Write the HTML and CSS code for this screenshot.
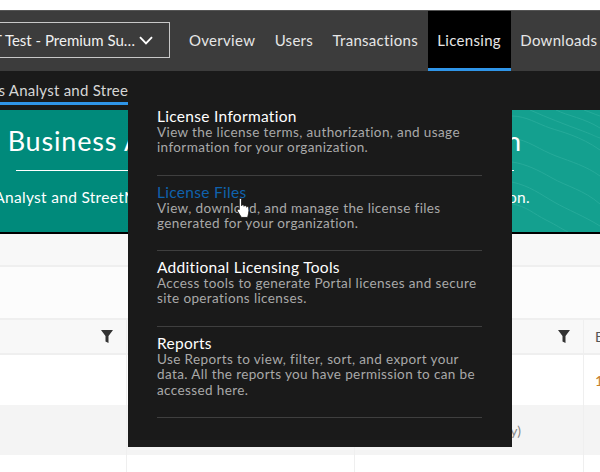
FILE: index.html
```html
<!DOCTYPE html>
<html lang="en">
<head>
<meta charset="utf-8">
<title>Licensing</title>
<link rel="stylesheet" href="styles.css">
</head>
<body>
<div class="page">
  <header class="nav">
    <button class="org"><span class="org-name">T Test - Premium Su…</span>
      <svg class="chev" width="14" height="9" viewBox="0 0 14 9"><path d="M1 1.2 7 7.4 13 1.2" fill="none" stroke="#fff" stroke-width="1.9"/></svg>
    </button>
    <nav class="tabs">
      <a class="tab">Overview</a>
      <a class="tab">Users</a>
      <a class="tab">Transactions</a>
      <a class="tab active">Licensing</a>
      <a class="tab">Downloads</a>
    </nav>
  </header>
  <div class="subnav"><span class="subtab">Business Analyst and StreetMap Premium</span></div>
  <section class="hero">
    <svg class="contours" width="600" height="122" viewBox="0 0 600 122">
      <g fill="none" stroke="#37b5a5" stroke-width="1" opacity=".5">
        <path d="M512 6c14 0 26 8 38 12s30 8 50 22"/>
        <path d="M512 28c16 2 28 12 44 18s30 10 44 20"/>
        <path d="M512 52c14 2 26 8 40 16s32 12 48 26"/>
        <path d="M512 72c18 4 28 12 42 20s30 14 46 24"/>
        <path d="M512 94c14 2 22 10 34 16s14 8 22 12"/>
        <path d="M556 0c12 6 28 8 44 18"/>
        <path d="M530 0c18 8 34 14 50 20s14 6 20 8"/>
        <path d="M584 0c6 2 10 4 16 6"/>
      </g>
    </svg>
    <h1 class="hero-title">Business Analyst – Licensing Information</h1>
    <div class="hero-rule"></div>
    <p class="hero-sub">Business Analyst and StreetMap Premium licensing information for your organization.</p>
  </section>
  <div class="strip strip-a"></div>
  <div class="strip strip-b"></div>
  <div class="table">
    <div class="row head">
      <div class="cell c1"><svg class="filter" width="12" height="13" viewBox="0 0 12 13"><path d="M0 0h12L7.500 6v7l-3-1.500V6z" fill="#333"/></svg></div>
      <div class="cell c2"><svg class="filter" width="12" height="13" viewBox="0 0 12 13"><path d="M0 0h12L7.500 6v7l-3-1.500V6z" fill="#333"/></svg></div>
      <div class="cell c3"><svg class="filter" width="12" height="13" viewBox="0 0 12 13"><path d="M0 0h12L7.500 6v7l-3-1.500V6z" fill="#333"/></svg></div>
      <div class="cell c4 head-label">Expires</div>
    </div>
    <div class="row one">
      <div class="cell c1"></div><div class="cell c2"></div><div class="cell c3"></div>
      <div class="cell c4 orange">1</div>
    </div>
    <div class="row two">
      <div class="cell c1"></div><div class="cell c2"></div><div class="cell c3 muted">Business Analyst (Monthly)</div><div class="cell c4"></div>
    </div>
    <div class="row three">
      <div class="cell c1"></div><div class="cell c2"></div><div class="cell c3"></div><div class="cell c4"></div>
    </div>
  </div>

  <div class="menu">
    <a class="item">
      <span class="item-title">License Information</span>
      <span class="item-text">View the license terms, authorization, and usage information for your organization.</span>
    </a>
    <a class="item">
      <span class="item-title hover">License Files</span>
      <span class="item-text">View, download, and manage the license files generated for your organization.</span>
    </a>
    <a class="item">
      <span class="item-title">Additional Licensing Tools</span>
      <span class="item-text">Access tools to generate Portal licenses and secure site operations licenses.</span>
    </a>
    <a class="item">
      <span class="item-title">Reports</span>
      <span class="item-text">Use Reports to view, filter, sort, and export your data. All the reports you have permission to can be accessed here.</span>
    </a>
  </div>
  <svg class="cursor" width="16" height="21" viewBox="0 0 14 20">
    <path d="M2.500 1.500c0-1.400 2.200-1.400 2.200 0v5.800c.2-1.200 2.100-1.200 2.300 0v.6c.3-1.100 2.100-1 2.300.2v.6c.4-.9 2.100-.7 2.200.5.3 2 .3 4-.2 5.800l-.8 3.500H4.500L1 12.800C0 11.400 1.200 10 2.500 11z" fill="#fff" stroke="#111" stroke-width=".8" stroke-linejoin="round"/>
  </svg>
</div>
</body>
</html>
```
FILE: styles.css
```css
* { box-sizing: border-box; }
html, body { margin: 0; padding: 0; background: #fff; }
body { font-family: Lato, "Noto Sans", "Liberation Sans", sans-serif; }
.page { position: relative; width: 600px; height: 472px; overflow: hidden; padding-top: 10px; }

.nav { height: 61px; background: #3c3c3c; border-top: 1px solid #555; display: flex; align-items: stretch; margin-left: -20px; width: 640px; }
.org { margin: 11px 0 0 0; width: 190px; height: 36px; background: transparent; border: 1px solid #c8c8c8; color: #f0f0f0; font: inherit; font-size: 15px; display: flex; align-items: center; justify-content: flex-end; gap: 4px; padding: 0 16px 0 0; white-space: nowrap; }
.org-name { letter-spacing: 0; }
.chev { flex: none; }
.tabs { display: flex; margin-left: 9.3px; }
.tab { display: flex; align-items: center; padding: 0 9.7px; font-size: 15px; color: #e6e6e6; letter-spacing: .3px; border-bottom: 3px solid transparent; white-space: nowrap; height: 60px; }
.tab.active { background: #000; border-bottom-color: #2f95e8; }

.subnav { height: 39px; background: #1a1a1a; margin-left: -54px; width: 700px; padding-bottom: 5px; display: flex; }
.subtab { font-size: 15px; color: #d6d6d6; letter-spacing: .25px; width: 182px; white-space: nowrap; border-bottom: 3px solid #2f95e8; overflow: hidden; padding-top: 9px; line-height: 20px; }

.hero { position: relative; height: 122px; background: linear-gradient(90deg, #008a7b 0 20%, #069080 45%, #14a08f 85%); overflow: hidden; color: #fff; display: flex; flex-direction: column; align-items: center; padding-right: 70px; }
.contours { position: absolute; inset: 0; }
.hero-title { position: relative; align-self: flex-end; padding-right: 8px; font-weight: 400; font-size: 27px; line-height: 34px; margin: 14px 0 0; white-space: nowrap; letter-spacing: .82px; }
.hero-rule { position: relative; width: 498px; flex: none; border-top: 1px solid #fff; margin-top: 12px; }
.hero-sub { position: relative; align-self: flex-end; font-size: 15.5px; line-height: 20px; margin: 16px 0 0; white-space: nowrap; letter-spacing: .3px; }

.strip { border-bottom: 2px solid #efefef; }
.strip-a { height: 35px; border-top: 2px solid #000; background: #f8f8f8; }
.strip-b { height: 53px; background: #fcfcfc; }

.table { display: flex; flex-direction: column; }
.row { display: grid; grid-template-columns: 127px 228px 229px 16px; }
.cell { border-right: 1px solid #efefef; display: flex; align-items: center; justify-content: flex-end; padding-right: 13px; font-size: 14px; white-space: nowrap; }
.cell.c4 { border-right: 0; padding: 0 0 0 11px; justify-content: flex-start; overflow: hidden; }
.head { height: 35px; background: #f8f8f8; border-bottom: 2px solid #efefef; }
.head-label { color: #555; }
.filter { display: block; }
.one { height: 50px; background: #fff; }
.two { height: 50px; background: #f4f4f4; }
.three { height: 30px; background: #fff; }
.orange { color: #c8802a; }
.muted { color: #888; padding-right: 62px; }

.menu { position: absolute; left: 128px; top: 71px; width: 384px; height: 376px; background: #1a1a1a; padding: 29px 30px 0 29px; display: flex; flex-direction: column; }
.item { display: flex; flex-direction: column; height: 76px; padding-top: 7.5px; border-bottom: 1px solid #3f3f3f; flex: none; }
.item:nth-child(2) { height: 75px; }
.item:last-child { height: 91px; }
.item-title { font-size: 15.5px; line-height: 16px; color: #fff; letter-spacing: .3px; }
.item-title.hover { color: #0f62ad; }
.item-text { font-size: 13.5px; line-height: 15.7px; color: #a9a9a9; letter-spacing: .38px; margin-top: 1px; }

.cursor { position: absolute; left: 236px; top: 198px; }
```
